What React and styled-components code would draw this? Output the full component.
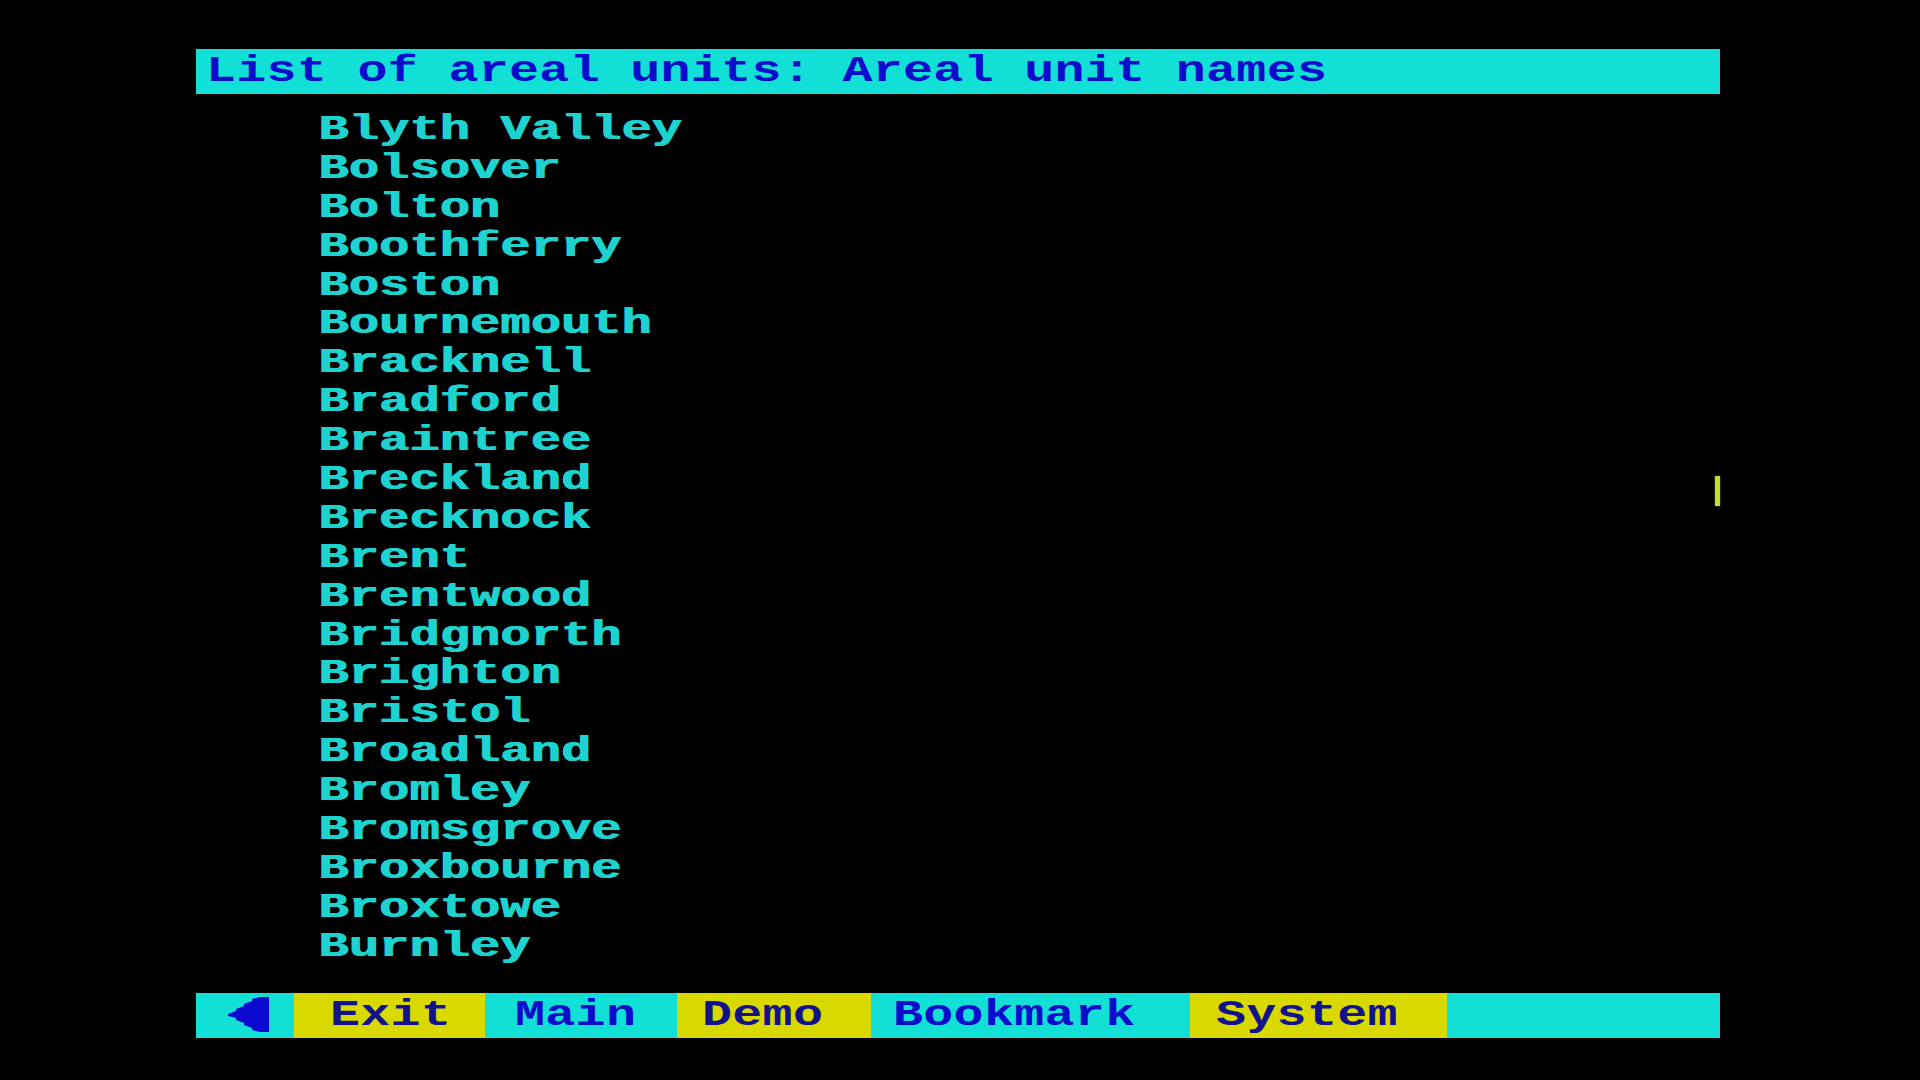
import React from "react";
import styled, { createGlobalStyle } from "styled-components";

const GlobalStyle = createGlobalStyle`
  html, body {
    margin: 0;
    padding: 0;
    background-color: #000;
  }
  body {
    font-family: "Liberation Mono", "DejaVu Sans Mono", monospace;
  }
`;

const Screen = styled.div`
  position: relative;
  width: 1920px;
  height: 1080px;
  background-color: #000;
  padding-left: 196px;
  padding-top: 49px;
  box-sizing: border-box;
  display: flex;
  flex-direction: column;
  overflow: hidden;
`;

// teletext-ish text: wide glyphs, squashed vertically
const Glyphs = styled.span`
  display: inline-block;
  font-size: 50px;
  font-weight: 700;
  letter-spacing: 0.3px;
  transform: scaleY(${(p) => p.$squash || 0.74});
  transform-origin: 50% 50%;
  white-space: pre;
  text-shadow: ${(p) => (p.$heavy ? "1.5px 0 0 currentColor" : "none")};
`;

const TitleBar = styled.div`
  width: 1524px;
  height: 45px;
  line-height: 45px;
  background-color: #12dfd6;
  color: #0c0ccc;
  padding-left: 10px;
  box-sizing: border-box;
`;

const NameList = styled.ul`
  list-style: none;
  margin: 17px 0 0 0;
  padding: 0 0 0 122px;
`;

const NameItem = styled.li`
  height: 38.9px;
  line-height: 38.9px;
  color: #1dd2cf;
`;

const MenuBar = styled.div`
  margin-top: 26px;
  width: 1524px;
  height: 45px;
  display: flex;
  background-color: #12dfd6;
`;

const MenuItem = styled.div`
  width: ${(p) => p.$width}px;
  flex: none;
  height: 45px;
  line-height: 45px;
  box-sizing: border-box;
  padding-left: ${(p) => p.$indent}px;
  background-color: ${(p) => (p.$yellow ? "#d9d900" : "#12dfd6")};
  color: ${(p) => (p.$yellow ? "#12128a" : "#0c0ccc")};
`;

const ArrowCell = styled.div`
  width: 98px;
  flex: none;
  height: 45px;
  display: flex;
  align-items: center;
  padding-left: 32px;
  box-sizing: border-box;
`;

const Cursor = styled.div`
  position: absolute;
  left: 1715px;
  top: 476px;
  width: 5px;
  height: 30px;
  background-color: #c6dc2a;
  box-shadow: 0 0 2px rgba(200, 220, 40, 0.6);
`;

const names = [
  "Blyth Valley",
  "Bolsover",
  "Bolton",
  "Boothferry",
  "Boston",
  "Bournemouth",
  "Bracknell",
  "Bradford",
  "Braintree",
  "Breckland",
  "Brecknock",
  "Brent",
  "Brentwood",
  "Bridgnorth",
  "Brighton",
  "Bristol",
  "Broadland",
  "Bromley",
  "Bromsgrove",
  "Broxbourne",
  "Broxtowe",
  "Burnley",
];

const menu = [
  { label: "Exit", width: 191, indent: 36, yellow: true },
  { label: "Main", width: 192, indent: 30, yellow: false },
  { label: "Demo", width: 194, indent: 25, yellow: true },
  { label: "Bookmark", width: 319, indent: 22, yellow: false },
  { label: "System", width: 257, indent: 26, yellow: true },
];

function BackArrow() {
  return (
    <svg width="42" height="36" viewBox="0 0 42 36">
      <polygon
        points="0,17 8,14 8,12 16,9 16,7 24,4 24,2 32,0 41,0 41,35 32,35 24,33 24,31 16,28 16,26 8,23 8,21 0,19"
        fill="#0a0ad0"
      />
    </svg>
  );
}

export default function App() {
  return (
    <>
      <GlobalStyle />
      <Screen>
        <TitleBar>
          <Glyphs>List of areal units: Areal unit names</Glyphs>
        </TitleBar>
        <NameList>
          {names.map((n) => (
            <NameItem key={n}>
              <Glyphs $squash={0.7} $heavy>
                {n}
              </Glyphs>
            </NameItem>
          ))}
        </NameList>
        <MenuBar>
          <ArrowCell>
            <BackArrow />
          </ArrowCell>
          {menu.map((m) => (
            <MenuItem key={m.label} $width={m.width} $indent={m.indent} $yellow={m.yellow}>
              <Glyphs>{m.label}</Glyphs>
            </MenuItem>
          ))}
        </MenuBar>
        <Cursor />
      </Screen>
    </>
  );
}
